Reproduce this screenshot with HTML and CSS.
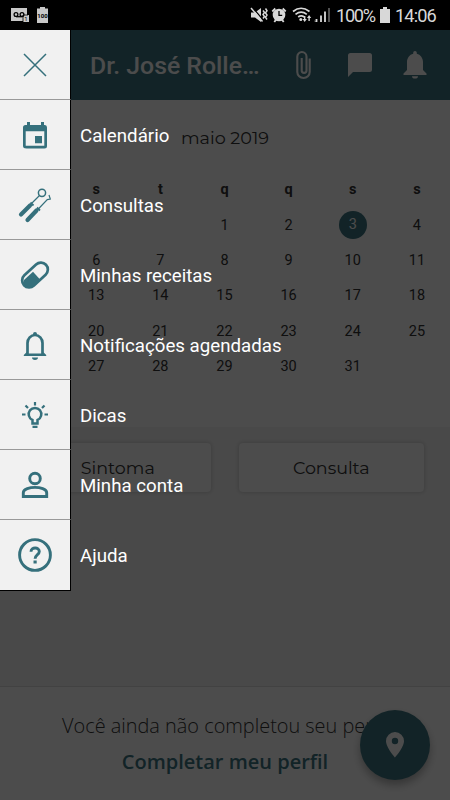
FILE: index.html
```html
<!DOCTYPE html>
<html lang="pt-BR">
<head>
  <meta charset="UTF-8" />
  <meta name="viewport" content="width=device-width, initial-scale=1.0"/>
  <title>Calendário</title>
  <link rel="stylesheet" href="styles.css">
</head>
<body>

  <!-- Status bar -->
  <div class="status-bar">
    <svg class="status-left" width="60" height="30" viewBox="0 0 60 30">
      <path fill="#c8c8c8" d="M11 8h16v7h2v7h-6v-1H11z"/>
      <g fill="none" stroke="#000" stroke-width="1.3">
        <circle cx="16" cy="14.5" r="1.9"/>
        <circle cx="22" cy="14.5" r="1.9"/>
        <path d="M16 16.7h6.500"/>
        <path d="M23 22v-7h5" stroke-width=".8"/>
      </g>
      <path fill="#c8c8c8" d="M37 8.500h3V7h5v1.500h3V23H37z"/>
      <text x="26" y="21" font-size="6" text-anchor="middle" fill="#000">1</text>
      <text class="tiny" x="42.500" y="18" text-anchor="middle">100</text>
    </svg>
    <div class="status-right">
      <svg width="85" height="30" viewBox="250 0 85 30">
        <!-- muted / vibrate -->
        <path fill="#d8d8d8" d="M251 12.500h4l6-4.500v14l-6-4.500h-4z"/>
        <path d="M252.500 7.500l11 13" stroke="#000" stroke-width="1.400"/>
        <g fill="none" stroke="#d8d8d8" stroke-width="1.500">
          <path d="M251 8l11.500 13.500"/>
          <path d="M263 10.500l1.500 2-1.500 2 1.500 2-1.500 2M265.500 8.500l1.500 2.200-1.500 2.200 1.500 2.200-1.500 2.200 1.500 2.200"/>
        </g>
        <!-- alarm -->
        <circle cx="279" cy="15" r="6.300" fill="#d8d8d8"/>
        <path d="M272.300 11.500l3-3M285.700 11.500l-3-3M274.300 22l1.500-2M283.700 22l-1.500-2" stroke="#d8d8d8" stroke-width="1.800"/>
        <path d="M279 11v4.300h3.200" fill="none" stroke="#000" stroke-width="1.300"/>
        <!-- wifi -->
        <g fill="none" stroke="#d8d8d8" stroke-width="1.700">
          <path d="M293 11.500q8-6.500 16.500 0M295.500 14.300q5.700-4.500 11.300 0M298.200 17q3-2.300 6 0"/>
        </g>
        <circle cx="300.800" cy="19.500" r="1.500" fill="#d8d8d8"/>
        <path fill="#d8d8d8" d="M304 16h1.400v3h1.400l-2.100 3-2.100-3H304zM309.800 21h-1.400v-3H307l2.100-3 2.100 3h-1.400z"/>
        <!-- signal -->
        <path d="M316.500 22v-3M321 22v-6.500M325 22V11.500" stroke="#d8d8d8" stroke-width="1.800"/>
        <path d="M315.600 22h-.8v-2.200z" fill="#d8d8d8"/>
        <path d="M329 22V8" stroke="#666" stroke-width="1.600"/>
      </svg>
      <span class="battery-level">100%</span>
      <svg class="battery" width="10" height="16" viewBox="0 0 10 16">
        <path fill="#d8d8d8" d="M0 2h3V0h4v2h3v14H0z"/>
      </svg>
      <span class="clock">14:06</span>
    </div>
  </div>

  <div class="screen">
    <header class="toolbar">
      <h1>Dr. José Rolle…</h1>
      <svg class="attach" width="18" height="30" viewBox="0 0 18 30">
        <path d="M14.700 8.500v13.500a6.200 6 0 0 1-12.400 0V6.700a4.600 4.700 0 0 1 9.200 0v13.800a2.400 2.400 0 0 1-4.800 0V8" fill="none" stroke="#fff" stroke-width="2.100"/>
      </svg>
      <svg class="chat" width="24" height="24" viewBox="0 0 24 24">
        <path d="M2.500 0h19A2.500 2.500 0 0 1 24 2.500v14a2.500 2.500 0 0 1-2.500 2.500H5l-5 5V2.500A2.500 2.500 0 0 1 2.500 0z"/>
      </svg>
      <svg class="bell" width="24" height="28" viewBox="0 0 24 28">
        <path d="M12 0a1.800 1.800 0 0 1 1.800 1.800v.9C17.500 3.500 20 7 20 11v8l3.500 3.500V24H.5v-1.500L4 19v-8c0-4 2.500-7.500 6.200-8.300v-.9A1.800 1.800 0 0 1 12 0zM9 25.300h6a3 2.300 0 0 1-6 0z"/>
      </svg>
    </header>

    <section class="calendar">
      <h2>maio 2019</h2>
      <div class="week weekdays">
        <span></span><span>s</span><span>t</span><span>q</span><span>q</span><span>s</span><span>s</span>
      </div>
      <div class="week">
        <span></span><span></span><span></span><span>1</span><span>2</span><span class="today">3</span><span>4</span>
      </div>
      <div class="week">
        <span></span><span>6</span><span>7</span><span>8</span><span>9</span><span>10</span><span>11</span>
      </div>
      <div class="week">
        <span></span><span>13</span><span>14</span><span>15</span><span>16</span><span>17</span><span>18</span>
      </div>
      <div class="week">
        <span></span><span>20</span><span>21</span><span>22</span><span>23</span><span>24</span><span>25</span>
      </div>
      <div class="week">
        <span></span><span>27</span><span>28</span><span>29</span><span>30</span><span>31</span><span></span>
      </div>
    </section>

    <section class="actions">
      <button class="symptom">Sintoma</button>
      <button class="visit">Consulta</button>
    </section>

    <footer class="profile">
      <p>Você ainda não completou seu perfil</p>
      <a href="#">Completar meu perfil</a>
    </footer>

    <div class="fab">
      <svg width="18" height="26" viewBox="0 0 18 26">
        <path fill-rule="evenodd" d="M9 0a9 9 0 0 1 9 9c0 6.500-9 16.500-9 16.500S0 15.500 0 9a9 9 0 0 1 9-9zm0 5.800a3.200 3.200 0 1 0 0 6.400 3.200 3.200 0 0 0 0-6.400z"/>
      </svg>
    </div>
  </div>

  <!-- Open menu -->
  <div class="overlay">
    <nav class="menu">
      <div class="item">
        <div class="icon">
          <svg width="40" height="40" viewBox="0 0 40 40"><path class="line thin" d="M9 9l22 22M31 9L9 31"/></svg>
        </div>
      </div>
      <div class="item">
        <div class="icon">
          <svg width="40" height="40" viewBox="0 0 40 40">
            <path fill-rule="evenodd" d="M12 7h3v3h11V7h3v3h1q2 0 2 2.500v18.500q0 2.500-2.500 2.500h-18Q8 33.500 8 31V12.500Q8 10 10.500 10H12zM10.700 16.200v14.500h18.600V16.200zM20 21h7v7.200h-7z"/>
          </svg>
        </div>
        <span>Calendário</span>
      </div>
      <div class="item">
        <div class="icon">
          <svg width="40" height="40" viewBox="0 0 40 40">
            <g class="line">
              <circle cx="27" cy="7.800" r="3.600" stroke-width="1.500"/>
              <path d="M24.500 10.500L17 18M34 10l1.300 4-3 .6-9 9.400" stroke-width="1.200"/>
              <path d="M15 20.500L6 29.500M21.500 25.500L12.500 35" stroke-width="4.200" stroke-linecap="round"/>
              <path d="M15.500 17.500l3 3M22 22.500l3 3" stroke-width="1.800"/>
            </g>
          </svg>
        </div>
        <span>Consultas</span>
      </div>
      <div class="item">
        <div class="icon">
          <svg width="40" height="40" viewBox="0 0 40 40">
            <g transform="rotate(-43 20 20)">
              <rect class="line" x="5" y="13" width="30" height="14" rx="7" stroke-width="2.700"/>
            </g>
            <path d="M9 25l9-8.300 7.500 8.300-7 6.500q-4 2.500-8-.5-3-3-1.500-6z"/>
          </svg>
        </div>
        <span>Minhas receitas</span>
      </div>
      <div class="item">
        <div class="icon">
          <svg width="40" height="40" viewBox="0 0 40 40">
            <path class="line" d="M12.500 29V18a7.500 8 0 0 1 15 0v11" stroke-width="2.700"/>
            <path d="M18 9.500V9a2 2 0 0 1 4 0v1.500h-4zM8.800 30l3-3v1.500h16.400V27l3 3v1H8.800zM17 32.500h6a3 2.400 0 0 1-6 0z"/>
          </svg>
        </div>
        <span>Notificações agendadas</span>
      </div>
      <div class="item">
        <div class="icon">
          <svg width="40" height="40" viewBox="0 0 40 40">
            <path class="line" d="M17.500 28.500v-3.500a6.300 6.300 0 1 1 5 0v3.500z" stroke-width="2.500"/>
            <path class="line" d="M17.500 31.800h5M20 7v3.500M7 19.500h3.500M29.500 19.500H33M10.500 10.500l2.500 2.500M29.500 10.500L27 13" stroke-width="2.200"/>
          </svg>
        </div>
        <span>Dicas</span>
      </div>
      <div class="item">
        <div class="icon">
          <svg width="40" height="40" viewBox="0 0 40 40">
            <g class="line" stroke-width="2.900">
              <circle cx="20" cy="13.500" r="5.300"/>
              <path d="M8.300 31.500v-3.700c0-3.700 6.700-5.400 11.700-5.400s11.700 1.700 11.700 5.400v3.700z"/>
            </g>
          </svg>
        </div>
        <span>Minha conta</span>
      </div>
      <div class="item">
        <div class="icon">
          <svg width="40" height="40" viewBox="0 0 40 40">
            <circle class="line" cx="20" cy="20" r="15.400" stroke-width="2.900"/>
            <path class="line" d="M16 16.800c0-5 8.300-5 8.300-.3 0 3.200-4.200 3-4.200 7.300" stroke-width="2.900"/>
            <path d="M18.500 25.500h3.200v3h-3.200z"/>
          </svg>
        </div>
        <span>Ajuda</span>
      </div>
    </nav>
  </div>

</body>
</html>
```
FILE: styles.css
```css
* { box-sizing: border-box; }
body {
  margin: 0;
  width: 450px;
  height: 800px;
  overflow: hidden;
  position: relative;
  background: #000;
  font-family: Roboto, sans-serif;
}
svg { display: block; flex: none; }
.status-bar {
  height: 30px;
  display: flex;
  justify-content: space-between;
  color: #d8d8d8;
}
.tiny {
  font-size: 6px;
  font-weight: bold;
  fill: #000;
}
.status-right {
  display: flex;
  align-items: center;
  width: 200px;
  font-size: 18.2px;
  white-space: nowrap;
}
.battery-level {
  width: 40px;
  margin-left: 1px;
  letter-spacing: -1.3px;
}
.battery { margin-left: 4px; }
.clock {
  margin-left: 5px;
  letter-spacing: -0.9px;
}
.screen {
  height: 770px;
  display: flex;
  flex-direction: column;
  background: #fff;
}
.toolbar {
  height: 70px;
  padding-left: 90px;
  display: flex;
  align-items: center;
  background: #3c7682;
  color: #fff;
}
.toolbar h1 {
  margin: 0;
  width: 205px;
  font-size: 24.8px;
  font-weight: 500;
  white-space: nowrap;
}
.toolbar svg { fill: #fff; }
.toolbar .chat { margin-left: 35px; }
.toolbar .bell { margin-left: 31px; }
.calendar {
  height: 327px;
  color: #333;
}
.calendar h2 {
  margin: 0;
  height: 72px;
  padding-top: 26px;
  text-align: center;
  font: 17.6px/24px Montserrat, Inter, sans-serif;
}
.week {
  display: grid;
  grid-template-columns: repeat(7, 1fr);
  width: 449px;
  height: 35.4px;
  align-items: center;
  justify-items: center;
  font-size: 14.5px;
}
.weekdays { font-weight: bold; }
.today {
  width: 28px;
  line-height: 28px;
  border-radius: 50%;
  background: #3c7682;
  color: #fff;
  text-align: center;
}
.actions {
  height: 259px;
  padding: 16px 26px 0 25px;
  display: flex;
  gap: 28px;
  align-items: flex-start;
  background: #f4f4f4;
}
.actions button {
  flex: 1;
  height: 49px;
  padding: 0;
  border: 0;
  border-radius: 4px;
  background: #fdfdfd;
  color: #333;
  box-shadow: 0 0 4px rgba(0, 0, 0, 0.2);
  font: 17.5px Montserrat, Inter, sans-serif;
}
.profile {
  flex: 1;
  border-top: 1px solid #ddd;
  padding-top: 24px;
  text-align: center;
  font: 20px/30px "Open Sans", sans-serif;
}
.profile p {
  margin: 0 0 6px;
  font-size: 19.9px;
  font-weight: 300;
  color: #333;
}
.profile a {
  color: #3c7682;
  font-weight: 600;
  text-decoration: none;
}
.fab {
  position: absolute;
  right: 20px;
  bottom: 20px;
  width: 70px;
  height: 70px;
  border-radius: 50%;
  display: flex;
  align-items: center;
  justify-content: center;
  background: #3c7682;
  fill: #fff;
  box-shadow: 0 5px 9px rgba(0, 0, 0, 0.3);
}
.overlay {
  position: absolute;
  top: 30px;
  left: 0;
  width: 450px;
  height: 770px;
  background: rgba(0, 0, 0, 0.7);
}
.item {
  height: 70px;
  display: flex;
  align-items: center;
  gap: 9px;
  color: #fff;
  font-size: 18.7px;
}
.item span { padding-top: 1px; }
.icon {
  width: 71px;
  height: 70px;
  display: flex;
  align-items: center;
  padding-left: 15px;
  background: #f1f1f1;
  border-right: 1px solid #000;
  border-bottom: 1px solid #999;
  fill: #35707c;
}
.item:last-child .icon {
  height: 71px;
  border-bottom-color: #000;
}
.line {
  fill: none;
  stroke: #35707c;
}
.thin { stroke-width: 1.5; }
```
